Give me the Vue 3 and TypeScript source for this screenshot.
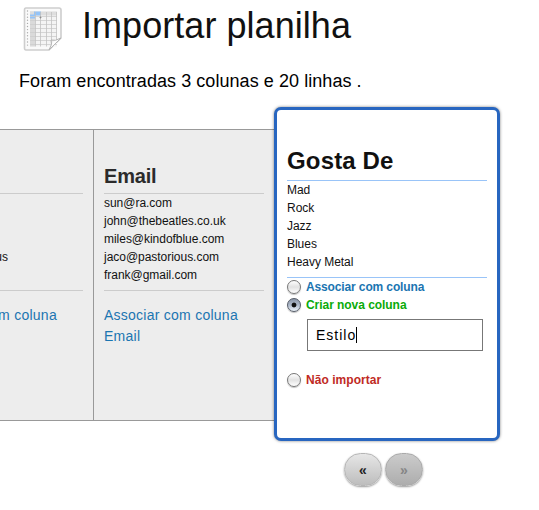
<script setup lang="ts">
import { ref } from 'vue'

interface Column {
  title: string
  rows: string[]
  target: string
}

const columns: Column[] = [
  { title: '', rows: ['', '', '', 'Jaco Pastorious', ''], target: '' },
  {
    title: 'Email',
    rows: ['sun@ra.com', 'john@thebeatles.co.uk', 'miles@kindofblue.com', 'jaco@pastorious.com', 'frank@gmail.com'],
    target: 'Email',
  },
]
const current = { title: 'Gosta De', rows: ['Mad', 'Rock', 'Jazz', 'Blues', 'Heavy Metal'] }
const action = ref('create')
const newName = ref('Estilo')
const gridRows = [11.5, 15.5, 19.5, 23.5, 27.5, 31.5, 35.5, 39.5]
const holes = Array.from({ length: 12 }, (_, i) => 5 + i * 3.1)
</script>

<template>
  <main class="page">
    <header class="head">
      <svg class="sheet" width="42" height="48" viewBox="0 0 42 48">
        <defs>
          <linearGradient id="fold" x1="0" y1="0" x2="1" y2="1">
            <stop offset="0" stop-color="#c4c4c4" />
            <stop offset=".4" stop-color="#fff" />
            <stop offset="1" stop-color="#d0d0d0" />
          </linearGradient>
        </defs>
        <path d="M4 2H37Q39 2 39 4V32L27 44H4Q2.500 44 2.500 42V4Q2.500 2 4 2Z" fill="#fafafa" stroke="#cecece" stroke-width="1.6" />
        <rect x="8" y="5.500" width="27" height="35" fill="#f4f4f4" />
        <rect x="8" y="5.500" width="5" height="35" fill="#dadada" />
        <rect x="8" y="5.500" width="27" height="4" fill="#dedede" />
        <rect x="12" y="5.500" width="7" height="4" fill="#94c4f8" />
        <rect x="8" y="8.500" width="5" height="4" fill="#94c4f8" />
        <path v-for="y in gridRows" :key="y" :d="`M8 ${y - 1}H35`" stroke="#cdcdcd" stroke-width=".8" />
        <path d="M13.500 6V40.500M18.500 6V40.500M24.500 6V40.500M29.500 6V38M34.500 6V34" stroke="#c2c2c2" stroke-width=".8" />
        <path d="M17.500 11.500H19.500M18.500 10.500V12.500" stroke="#888" stroke-width=".8" />
        <circle v-for="y in holes" :key="y" cx="5.500" :cy="y" r=".7" fill="#aaa" />
        <path d="M27 44Q31 38 29 34Q33 35.500 39 32Z" fill="url(#fold)" stroke="#b4b4b4" stroke-width="1" />
      </svg>
      <h1>Importar planilha</h1>
    </header>
    <p class="summary">Foram encontradas 3 colunas e 20 linhas .</p>

    <div class="board">
      <section v-for="(col, i) in columns" :key="i" class="column">
        <h2>{{ col.title }}</h2>
        <ul>
          <li v-for="(row, r) in col.rows" :key="r">{{ row }}</li>
        </ul>
        <p class="mapping">Associar com coluna<br />{{ col.target }}</p>
      </section>

      <section class="active">
        <h2>{{ current.title }}</h2>
        <ul>
          <li v-for="row in current.rows" :key="row">{{ row }}</li>
        </ul>
        <div class="choice link" @click="action = 'link'">
          <span class="radio" :class="{ on: action === 'link' }"></span><span class="label">Associar com coluna</span>
        </div>
        <div class="choice create" @click="action = 'create'">
          <span class="radio" :class="{ on: action === 'create' }"></span><span class="label">Criar nova coluna</span>
        </div>
        <div class="field"><span>{{ newName }}</span><i class="caret"></i></div>
        <div class="choice skip" @click="action = 'skip'">
          <span class="radio" :class="{ on: action === 'skip' }"></span><span class="label">Não importar</span>
        </div>
      </section>
    </div>

    <nav class="pager">
      <button type="button">«</button>
      <button type="button" class="off">»</button>
    </nav>
  </main>
</template>

<style>
body {
  background: #fff;
}
</style>

<style scoped>
.page {
  box-sizing: border-box;
  width: 539px;
  height: 510px;
  overflow: hidden;
  font-family: "Liberation Sans", Arial, sans-serif;
  color: #111;
}
h1, h2, p, ul {
  margin: 0;
  padding: 0;
  font-weight: normal;
}
ul {
  list-style: none;
}
.head {
  display: flex;
  height: 60px;
  padding-left: 22px;
}
.sheet {
  margin-top: 6px;
  flex: none;
}
h1 {
  margin-left: 18px;
  font-size: 36px;
  line-height: 40px;
  padding-top: 6px;
  letter-spacing: 0.05px;
}
.summary {
  height: 69px;
  padding: 10px 0 0 19px;
  box-sizing: border-box;
  font-size: 18px;
  line-height: 22px;
  letter-spacing: 0.06px;
  color: #000;
}
.board {
  display: flex;
  height: 292px;
  margin-left: -88px;
  width: 589px;
}
.column {
  box-sizing: border-box;
  flex: none;
  width: 181px;
  height: 292px;
  padding: 0 10px;
  background: #ededed;
  border: solid #999;
  border-width: 1px 0 1px 1px;
}
.column h2 {
  box-sizing: border-box;
  height: 64px;
  padding-top: 34px;
  font-size: 20px;
  font-weight: bold;
  line-height: 24px;
  color: #2b2b2b;
  border-bottom: 1px solid #ccc;
  letter-spacing: -0.2px;
}
.column ul {
  height: 96px;
  border-bottom: 1px solid #ccc;
}
li {
  height: 18px;
  font-size: 12px;
  line-height: 18px;
  letter-spacing: -0.03px;
}
.mapping {
  padding-top: 14px;
  font-size: 14px;
  line-height: 21px;
  letter-spacing: 0.25px;
  color: #1b75b1;
}
.active {
  box-sizing: border-box;
  flex: none;
  width: 226px;
  height: 334px;
  margin-top: -22px;
  padding: 0 10px;
  position: relative;
  background: #fff;
  border: 3px solid #2866c0;
  border-radius: 7px;
  box-shadow: 0 0 3px rgba(0, 0, 0, 0.5);
}
.active h2 {
  box-sizing: border-box;
  height: 71px;
  padding-top: 37px;
  font-size: 24px;
  font-weight: bold;
  line-height: 28px;
  letter-spacing: 0.15px;
  border-bottom: 1px solid #99c4f8;
}
.active ul {
  height: 96px;
  border-bottom: 1px solid #99c4f8;
}
.choice {
  display: flex;
  align-items: center;
  height: 18px;
  font-size: 12px;
  font-weight: bold;
  line-height: 18px;
  letter-spacing: -0.13px;
}
.radio {
  box-sizing: border-box;
  width: 14px;
  height: 14px;
  margin-right: 5px;
  border: 1px solid #777;
  border-radius: 50%;
  background: linear-gradient(#fff, #e2e2e2 50%, #fff);
  box-shadow: 0 1px 1px rgba(0, 0, 0, 0.25);
}
.radio.on {
  border-color: #555c68;
  background: radial-gradient(circle at center, #111 0 2px, transparent 2.8px), linear-gradient(#8b96a8, #aeb9ca 50%, #edf3fa);
}
.link {
  color: #1b75b1;
}
.create {
  color: #0aab0a;
  letter-spacing: -0.05px;
}
.skip {
  color: #c02a24;
  letter-spacing: 0.05px;
}
.field {
  box-sizing: border-box;
  display: flex;
  align-items: center;
  width: 176px;
  height: 32px;
  margin: 5px 0 20px 20px;
  padding-left: 8px;
  border: 1px solid #777;
  font-size: 14px;
  letter-spacing: 1px;
  color: #000;
}
.caret {
  width: 1px;
  height: 16px;
  background: #000;
}
.pager {
  display: flex;
  gap: 3px;
  padding: 32px 0 0 344px;
}
button {
  width: 38px;
  height: 33px;
  padding: 0;
  border: 1px solid #b5b5b5;
  border-radius: 17px;
  background: linear-gradient(#e6e6e6, #bdbdbd);
  box-shadow: 0 1px 2px rgba(0, 0, 0, 0.4);
  font: bold 14px "Liberation Sans", Arial, sans-serif;
  color: #222;
}
.off {
  border-color: #aaa;
  background: linear-gradient(#cbcbcb, #adadad);
  color: #858585;
}
</style>
